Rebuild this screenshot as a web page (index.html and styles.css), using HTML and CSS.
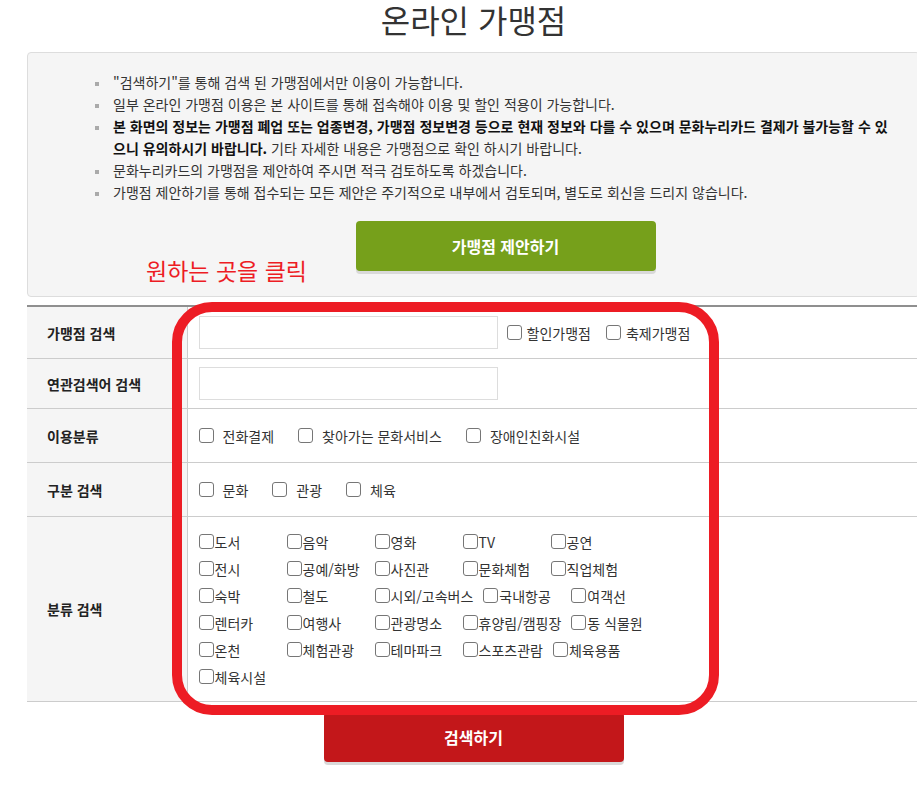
FILE: index.html
```html
<!DOCTYPE html>
<html lang="ko">
<head>
<meta charset="utf-8">
<title>온라인 가맹점</title>
<link rel="stylesheet" href="styles.css">
</head>
<body>
<div class="page">
  <h1 class="page-title">온라인 가맹점</h1>

  <section class="notice">
    <ul class="notice-list">
      <li>"검색하기"를 통해 검색 된 가맹점에서만 이용이 가능합니다.</li>
      <li>일부 온라인 가맹점 이용은 본 사이트를 통해 접속해야 이용 및 할인 적용이 가능합니다.</li>
      <li><strong>본 화면의 정보는 가맹점 폐업 또는 업종변경, 가맹점 정보변경 등으로 현재 정보와 다를 수 있으며 문화누리카드 결제가 불가능할 수 있으니 유의하시기 바랍니다.</strong> 기타 자세한 내용은 가맹점으로 확인 하시기 바랍니다.</li>
      <li>문화누리카드의 가맹점을 제안하여 주시면 적극 검토하도록 하겠습니다.</li>
      <li>가맹점 제안하기를 통해 접수되는 모든 제안은 주기적으로 내부에서 검토되며, 별도로 회신을 드리지 않습니다.</li>
    </ul>
    <div class="notice-action">
      <a class="btn btn-green" href="#">가맹점 제안하기</a>
    </div>
  </section>

  <table class="search-table">
    <colgroup><col class="col-label"><col></colgroup>
    <tbody>
      <tr class="row-first">
        <th>가맹점 검색</th>
        <td>
          <div class="field">
            <input class="text-input" type="text">
            <label class="opt-tight"><input type="checkbox" class="chk">할인가맹점</label>
            <label class="opt-tight"><input type="checkbox" class="chk">축제가맹점</label>
          </div>
        </td>
      </tr>
      <tr class="row-input">
        <th>연관검색어 검색</th>
        <td>
          <div class="field">
            <input class="text-input" type="text">
          </div>
        </td>
      </tr>
      <tr class="row-check">
        <th>이용분류</th>
        <td>
          <div class="opt-group">
            <label class="opt"><input type="checkbox" class="chk">전화결제</label>
            <label class="opt"><input type="checkbox" class="chk">찾아가는 문화서비스</label>
            <label class="opt"><input type="checkbox" class="chk">장애인친화시설</label>
          </div>
        </td>
      </tr>
      <tr class="row-check">
        <th>구분 검색</th>
        <td>
          <div class="opt-group">
            <label class="opt"><input type="checkbox" class="chk">문화</label>
            <label class="opt"><input type="checkbox" class="chk">관광</label>
            <label class="opt"><input type="checkbox" class="chk">체육</label>
          </div>
        </td>
      </tr>
      <tr class="row-grid">
        <th>분류 검색</th>
        <td>
          <div class="cat-row">
            <label class="cat"><input type="checkbox" class="chk">도서</label>
            <label class="cat"><input type="checkbox" class="chk">음악</label>
            <label class="cat"><input type="checkbox" class="chk">영화</label>
            <label class="cat"><input type="checkbox" class="chk">TV</label>
            <label class="cat"><input type="checkbox" class="chk">공연</label>
          </div>
          <div class="cat-row">
            <label class="cat"><input type="checkbox" class="chk">전시</label>
            <label class="cat"><input type="checkbox" class="chk">공예/화방</label>
            <label class="cat"><input type="checkbox" class="chk">사진관</label>
            <label class="cat"><input type="checkbox" class="chk">문화체험</label>
            <label class="cat"><input type="checkbox" class="chk">직업체험</label>
          </div>
          <div class="cat-row">
            <label class="cat"><input type="checkbox" class="chk">숙박</label>
            <label class="cat"><input type="checkbox" class="chk">철도</label>
            <label class="cat"><input type="checkbox" class="chk">시외/고속버스</label>
            <label class="cat"><input type="checkbox" class="chk">국내항공</label>
            <label class="cat"><input type="checkbox" class="chk">여객선</label>
          </div>
          <div class="cat-row">
            <label class="cat"><input type="checkbox" class="chk">렌터카</label>
            <label class="cat"><input type="checkbox" class="chk">여행사</label>
            <label class="cat"><input type="checkbox" class="chk">관광명소</label>
            <label class="cat"><input type="checkbox" class="chk">휴양림/캠핑장</label>
            <label class="cat"><input type="checkbox" class="chk">동 식물원</label>
          </div>
          <div class="cat-row">
            <label class="cat"><input type="checkbox" class="chk">온천</label>
            <label class="cat"><input type="checkbox" class="chk">체험관광</label>
            <label class="cat"><input type="checkbox" class="chk">테마파크</label>
            <label class="cat"><input type="checkbox" class="chk">스포츠관람</label>
            <label class="cat"><input type="checkbox" class="chk">체육용품</label>
          </div>
          <div class="cat-row">
            <label class="cat"><input type="checkbox" class="chk">체육시설</label>
          </div>
        </td>
      </tr>
    </tbody>
  </table>

  <div class="search-action">
    <a class="btn btn-red" href="#">검색하기</a>
  </div>

  <div class="annot-text">원하는 곳을 클릭</div>
  <div class="annot-box"></div>
</div>
</body>
</html>
```

FILE: styles.css
```css
* { box-sizing: border-box; }

html, body {
  margin: 0;
  padding: 0;
  overflow-x: hidden;
  background: #fff;
}

body {
  font-family: "Noto Sans CJK KR", "Noto Sans", sans-serif;
  font-size: 14px;
  color: #333;
}

.page {
  position: relative;
  width: 893px;
  margin-left: 27px;
}

.page-title {
  margin: 0;
  padding-top: 1px;
  font-size: 32px;
  line-height: 36px;
  font-weight: 400;
  text-align: center;
  color: #333;
}

/* notice box */
.notice {
  margin-top: 15px;
  background: #f5f5f5;
  border: 1px solid #ddd;
  border-radius: 4px;
  padding: 18px 21px 25px 67px;
}

.notice-list {
  list-style: none;
  margin: 0;
  padding: 0 7px 0 0;
  line-height: 22px;
}

.notice-list li {
  padding-left: 18px;
}

.notice-list li::before {
  content: "";
  display: inline-block;
  width: 4px;
  height: 4px;
  background: #aaa;
  margin-left: -18px;
  margin-right: 14px;
  vertical-align: middle;
}

.notice-list strong {
  color: #111;
  font-weight: 700;
}

.notice-action {
  margin: 18px 0 0 18px;
  display: flex;
  justify-content: center;
}

/* buttons */
.btn {
  display: flex;
  align-items: center;
  justify-content: center;
  width: 300px;
  height: 50px;
  border-radius: 4px;
  color: #fff;
  font-size: 16px;
  font-weight: 700;
  text-decoration: none;
}

.btn-green {
  background: #76a01b;
  box-shadow: 0 3px 0 #d9d9d9;
}

.btn-red {
  background: #c3171a;
  box-shadow: 0 3px 0 #d9d9d9;
}

/* search table */
.search-table {
  width: 100%;
  margin-top: 8px;
  border-collapse: collapse;
  table-layout: fixed;
  border-top: 2px solid #8f8f8f;
}

.col-label { width: 160px; }

.search-table th {
  background: #f5f5f5;
  border-right: 1px solid #ccc;
  border-bottom: 1px solid #ccc;
  text-align: left;
  padding: 0 0 0 20px;
  font-weight: 700;
  color: #222;
  vertical-align: middle;
}

.search-table td {
  border-bottom: 1px solid #ccc;
  padding: 8px 11px;
  vertical-align: middle;
}

.row-first td { padding: 9px 11px 9px; }
.row-check td { padding: 16px 11px 16px; }
.row-grid td { padding: 11px 11px; }

.field {
  display: flex;
  align-items: center;
  height: 33px;
}

.text-input {
  width: 299px;
  height: 33px;
  margin: 0;
  padding: 0 8px;
  border: 1px solid #ddd;
  background: #fff;
  font: inherit;
}

.chk {
  -webkit-appearance: none;
  appearance: none;
  flex: none;
  width: 15px;
  height: 15px;
  margin: 0;
  border: 1px solid #767676;
  border-radius: 3px;
  background: #fff;
}

.opt-tight {
  display: flex;
  align-items: center;
  margin-left: 9px;
}

.opt-tight + .opt-tight { margin-left: 15px; }
.opt-tight .chk { margin-right: 5px; }

.opt-group {
  display: flex;
  align-items: center;
  height: 21px;
}

.opt {
  display: flex;
  align-items: center;
  margin-right: 24px;
}

.opt .chk { margin-right: 9px; }

.cat-row {
  display: flex;
  align-items: center;
  gap: 10px;
  height: 27px;
}

.cat {
  display: flex;
  align-items: center;
  min-width: 78px;
}

.cat .chk { margin-right: 1px; }

.search-action {
  display: flex;
  justify-content: center;
  margin-top: 10px;
  padding-bottom: 30px;
}

/* annotation overlays */
.annot-text {
  position: absolute;
  left: 119px;
  top: 255px;
  font-size: 23px;
  font-weight: 400;
  line-height: 30px;
  color: #ed1c24;
  white-space: nowrap;
}

.annot-box {
  position: absolute;
  left: 145px;
  top: 302px;
  width: 547px;
  height: 413px;
  border: 10px solid #ed1c24;
  border-radius: 40px;
  pointer-events: none;
}
```
